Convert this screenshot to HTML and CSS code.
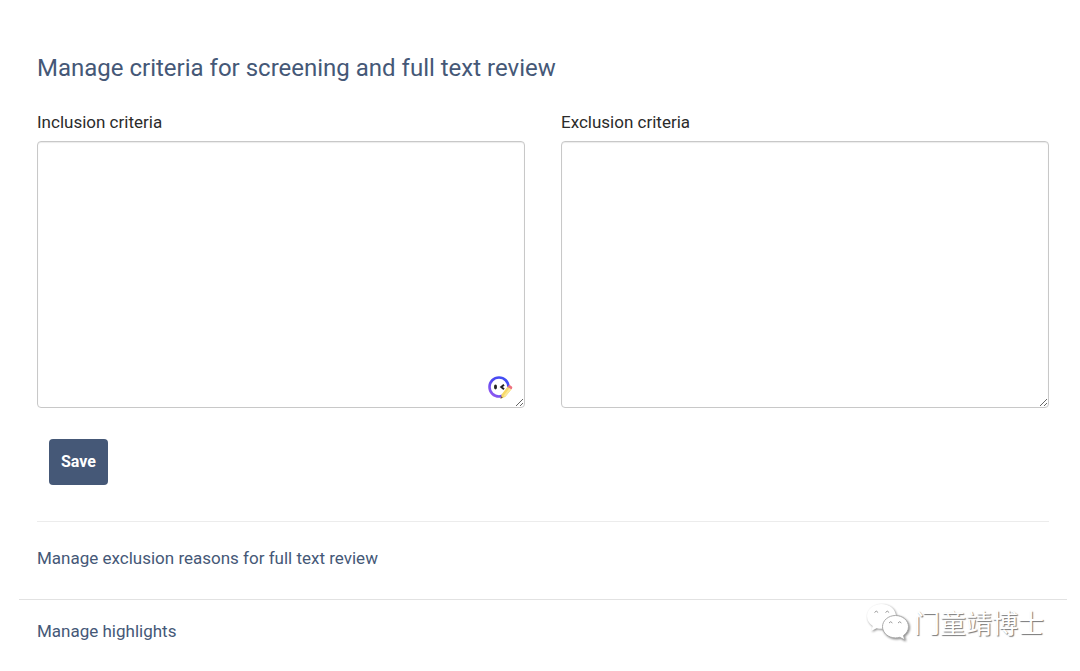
FILE: index.html
```html
<!DOCTYPE html>
<html lang="en">
<head>
    <meta charset="UTF-8">
    <meta name="viewport" content="width=device-width, initial-scale=1.0">
    <title>Manage criteria</title>
    <link rel="stylesheet" href="styles.css">
</head>
<body>
    <main class="settings">
        <section class="criteria">
            <h1>Manage criteria for screening and full text review</h1>
            <form>
                <div class="fields">
                    <div class="field">
                        <label for="inclusion">Inclusion criteria</label>
                        <div class="box">
                            <textarea id="inclusion"></textarea>
                            <svg class="assistant" viewBox="0 0 26 26" aria-hidden="true">
                                <defs>
                                    <linearGradient id="ring" x1="0" y1="1" x2="1" y2="0">
                                        <stop offset="0" stop-color="#a05cf0"/>
                                        <stop offset="0.5" stop-color="#5048f0"/>
                                        <stop offset="1" stop-color="#3c50f5"/>
                                    </linearGradient>
                                </defs>
                                <circle cx="12" cy="12" r="9.5" fill="#fff" stroke="url(#ring)" stroke-width="2.6"/>
                                <ellipse cx="8.5" cy="12" rx="1.5" ry="2.4" fill="#222"/>
                                <path d="M17 9.8l-2.7 2.2 2.7 2.2" fill="none" stroke="#222" stroke-width="2"/>
                                <path d="M13.5 23.8l1.2-4.6 6-7.6 3.6 2.8-6.2 7.6z" fill="#f8d968"/>
                                <path d="M16.5 21l6-7.9 1.8 1.3-6.2 7.6z" fill="#fbe99a"/>
                                <path d="M20.7 11.6l1-1.2q.8-.6 1.8.1l1.3 1q.9.8.3 1.7l-.9 1.2z" fill="#ee7180"/>
                                <path d="M13.5 23.8l.6-2.6 1.8 1.4z" fill="#6b5146"/>
                            </svg>
                        </div>
                    </div>
                    <div class="field">
                        <label for="exclusion">Exclusion criteria</label>
                        <div class="box">
                            <textarea id="exclusion"></textarea>
                        </div>
                    </div>
                </div>
                <button class="save" type="button">Save</button>
            </form>
        </section>
        <section class="reasons">
            <a href="#reasons">Manage exclusion reasons for full text review</a>
        </section>
        <section class="highlights">
            <a href="#highlights">Manage highlights</a>
        </section>
    </main>
    <div class="watermark">
        <svg viewBox="0 0 44 38" aria-hidden="true">
            <path d="M15.500 1C7.500 1 1 6.400 1 13.300c0 4 2.200 7.500 5.700 9.800L5.200 28l5.400-2.800c1.600.4 3.200.6 4.900.6 8 0 14.500-5.600 14.500-12.500S23.500 1 15.500 1z"/>
            <path class="front" d="M29.500 12.500c-7.200 0-13 5-13 11.200s5.800 11.200 13 11.200c1.500 0 3-.2 4.300-.6l5 2.700-1.300-4.500c3-2.100 5-5.200 5-8.800 0-6.200-5.800-11.200-13-11.200z"/>
            <path class="eye" d="M8.500 9.500q1.700-2.800 3.600 0M19.500 9.500q1.700-2.800 3.600 0M23 20q1.700-2.600 3.400 0M32 20q1.700-2.600 3.400 0"/>
        </svg>
        <span lang="zh">门童靖博士</span>
    </div>
</body>
</html>
```

FILE: styles.css
```css
* {
    box-sizing: border-box;
}
body {
    margin: 0;
    background: white;
    color: #2b2b2b;
    font-family: Roboto, "Liberation Sans", sans-serif;
    font-size: 17px;
    line-height: 24px;
}
.settings {
    margin: 0 13px 0 19px;
    padding-top: 52px;
}
.criteria {
    margin: 0 18px;
    padding-bottom: 36px;
    border-bottom: 1px solid #ececec;
}
h1 {
    margin: 0 0 25px;
    color: #455877;
    font-size: 24px;
    font-weight: 400;
    line-height: 33px;
}
.fields {
    display: grid;
    grid-template-columns: 1fr 1fr;
    gap: 36px;
}
label {
    display: block;
    margin-bottom: 7px;
}
.box {
    position: relative;
}
textarea {
    display: block;
    width: 100%;
    height: 267px;
    padding: 12px;
    border: 1px solid #c8c8c8;
    border-radius: 4px;
    box-shadow: inset 0 1px 1px rgba(0, 0, 0, 0.08);
    font: inherit;
}
.assistant {
    position: absolute;
    right: 12px;
    bottom: 7px;
    width: 26px;
    height: 26px;
}
.save {
    height: 46px;
    margin: 31px 12px 0;
    padding: 0 12px;
    border: none;
    border-radius: 4px;
    background: #455877;
    color: white;
    font: inherit;
    font-size: 16px;
    font-weight: 700;
    cursor: pointer;
}
a {
    color: #455877;
    text-decoration: none;
}
.reasons {
    padding: 24px 18px 29px;
    border-bottom: 1px solid #e2e2e2;
}
.highlights {
    padding: 19px 18px 28px;
}
/* white lettering lifted off the page by a grey shadow */
.watermark {
    position: absolute;
    right: 36px;
    bottom: 30px;
    display: flex;
    align-items: center;
    gap: 4px;
    color: white;
    font-family: "Noto Sans CJK SC", sans-serif;
    font-size: 26px;
    line-height: 38px;
    text-shadow: 1px 1px 1px #777;
}
.watermark svg {
    width: 44px;
    height: 38px;
    fill: white;
    filter: drop-shadow(1px 1px 1px #888);
}
.watermark .front {
    stroke: #aaa;
    stroke-width: 1;
}
.watermark .eye {
    fill: none;
    stroke: #999;
}
```
